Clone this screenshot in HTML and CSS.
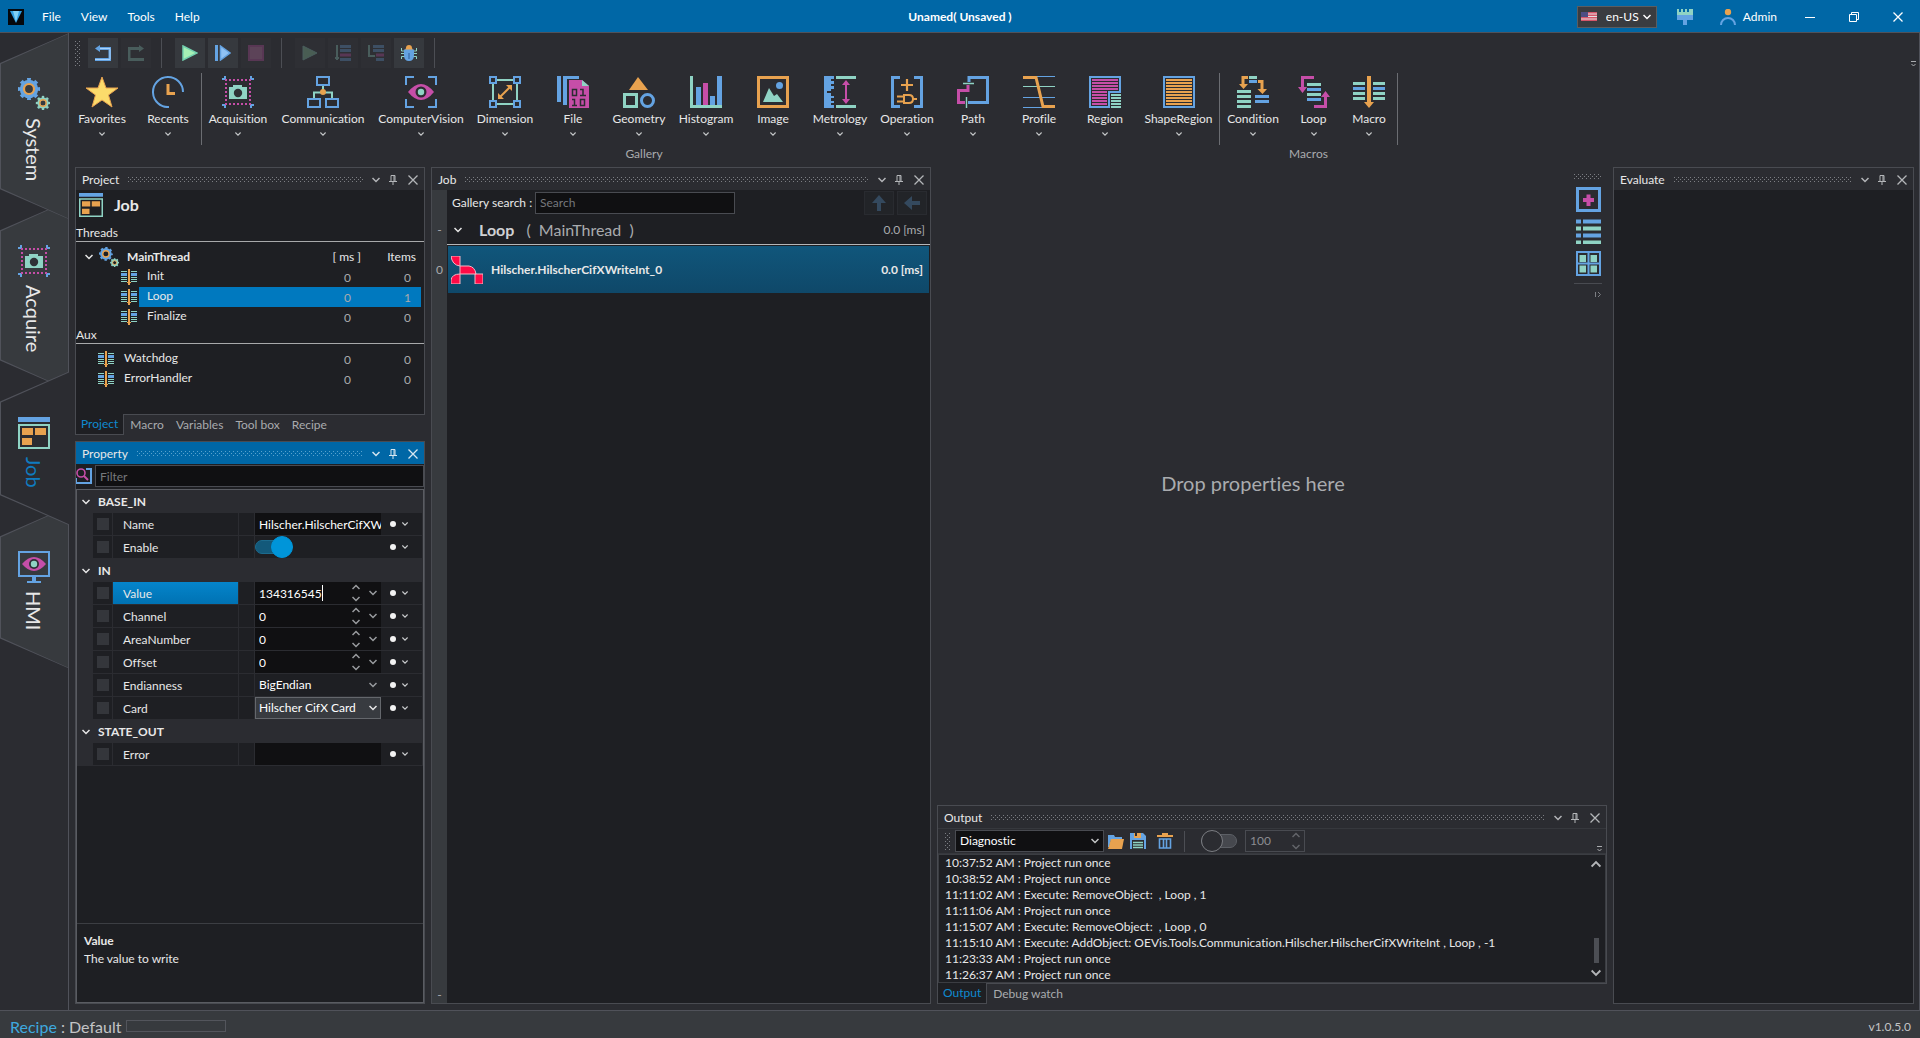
FILE: index.html
```html
<!DOCTYPE html>
<html lang="en">
<head>
<meta charset="utf-8">
<title>Unamed( Unsaved )</title>
<link rel="stylesheet" href="styles.css">
</head>
<body>
<svg class="sprite" aria-hidden="true">
  <symbol id="chev" viewBox="0 0 8 8"><path d="M0.5 2 L4 5.5 L7.5 2" fill="none" stroke="currentColor" stroke-width="1.5"/></symbol>
  <symbol id="chev-up" viewBox="0 0 8 8"><path d="M0.5 6 L4 2.5 L7.5 6" fill="none" stroke="currentColor" stroke-width="1.5"/></symbol>
  <symbol id="pin" viewBox="0 0 8 12"><path d="M2 7V1.5H6V7M0 7.5H8M4 8V11M5 2V7" fill="none" stroke="currentColor"/></symbol>
  <symbol id="close" viewBox="0 0 10 10"><path d="M0.5 0.5 L9.5 9.5 M9.5 0.5 L0.5 9.5" fill="none" stroke="currentColor" stroke-width="1.3"/></symbol>
  <symbol id="more" viewBox="0 0 8 8"><path d="M1 1.5H6M1.5 4 L3.5 6 L5.5 4" fill="none" stroke="currentColor"/></symbol>
  <symbol id="gears" viewBox="0 0 32 32">
    <circle cx="11" cy="11" r="7" fill="none" stroke="#64a3e2" stroke-width="4.5"/>
    <circle cx="11" cy="11" r="9.6" fill="none" stroke="#64a3e2" stroke-width="3" pathLength="16" stroke-dasharray="1" stroke-dashoffset="0.5"/>
    <circle cx="11" cy="11" r="5" fill="none" stroke="#e8a24f" stroke-width="2.2"/>
    <circle cx="25" cy="25" r="4.2" fill="none" stroke="#8fd3c4" stroke-width="3"/>
    <circle cx="25" cy="25" r="6" fill="none" stroke="#8fd3c4" stroke-width="2.4" pathLength="16" stroke-dasharray="1" stroke-dashoffset="0.5"/>
    <circle cx="25" cy="25" r="3.2" fill="none" stroke="#e8a24f" stroke-width="1.4"/>
  </symbol>
  <symbol id="camera" viewBox="0 0 32 32">
    <path d="M0 3H3V0M29 0V3H32M0 29H3V32M29 32V29H32" fill="none" stroke="#64a3e2" stroke-width="2"/>
    <path d="M4 4H28V28H4Z" fill="none" stroke="#c64ea8" stroke-width="2" stroke-dasharray="2 2" stroke-dashoffset="1"/>
    <path d="M7 11H11V9H20V11H25V23H7Z" fill="#8fd3c4"/>
    <circle cx="16" cy="17" r="4.2" fill="#2f3136"/>
  </symbol>
  <symbol id="job" viewBox="0 0 32 32">
    <path d="M0 0H32V5H0Z" fill="#64a3e2"/>
    <path d="M1 8H31V31H1Z" fill="none" stroke="#8fd3c4" stroke-width="2"/>
    <path d="M4 11H15V18H4ZM17 11H28V18H17ZM4 21H14V28H4Z" fill="#e8a24f"/>
  </symbol>
  <symbol id="hmi" viewBox="0 0 32 32">
    <path d="M1 1H31V25H1Z" fill="none" stroke="#64a3e2" stroke-width="2"/>
    <path d="M14 25H18V30H23V32H9V30H14Z" fill="#64a3e2"/>
    <path d="M4 13Q16 -1 28 13Q16 27 4 13Z" fill="#c64ea8"/>
    <circle cx="16" cy="13" r="5" fill="#2f3136"/><circle cx="16" cy="13" r="3.2" fill="#8fd3c4"/>
  </symbol>
  <symbol id="steps" viewBox="0 0 16 16">
    <path d="M0 2.500H6M10 2.500H16M0 8.500H6M10 8.500H16M0 10.500H6M10 10.500H16M0 12.500H6M10 12.500H16" stroke="#8fd3c4"/>
    <path d="M0 5.500H6M10 5.500H16" stroke="#64a3e2" stroke-width="3"/>
    <path d="M7 0H9V13H10V14H9V16H7V14H6V13H7Z" fill="#e8a24f"/>
  </symbol>
  <symbol id="search" viewBox="0 0 16 16">
    <path d="M0 10V15H15V1H10" fill="none" stroke="#64a3e2" stroke-width="2"/>
    <circle cx="5" cy="5" r="4" fill="#1e1f23" stroke="#c64ea8" stroke-width="1.6"/><path d="M8 8L12 12" stroke="#c64ea8" stroke-width="2"/>
  </symbol>
</svg>

<header class="titlebar">
  <svg class="logo" viewBox="0 0 16 16"><path d="M0 0H16V16H0Z" fill="#05080c"/><path d="M2 2H14L8 14Z" fill="#2f9de0"/><path d="M5 2H11L8 13Z" fill="#7fd0f5"/></svg>
  <nav class="menu"><button>File</button><button>View</button><button>Tools</button><button>Help</button></nav>
  <h1 class="doc-title">Unamed( Unsaved )</h1>
  <div class="session">
    <label class="lang">
      <svg width="16" height="9" viewBox="0 0 16 9"><path d="M0 0H16V9H0Z" fill="#e6dfe2"/><path d="M0 .75H16M0 3.25H16M0 5.75H16M0 8.25H16" stroke="#d5566a" stroke-width="1.4"/><path d="M0 0H7V5H0Z" fill="#4d4d83"/></svg>
      <select aria-label="Language"><option>en-US</option></select>
      <svg class="ic8"><use href="#chev"/></svg>
    </label>
    <button aria-label="Theme"><svg width="16" height="16" viewBox="0 0 16 16"><path d="M0 0H2V3H4V0H6V3H8V0H10V3H12V0H16V7H0Z" fill="#8fd3c4"/><path d="M0 6H16V11H10V16H6V11H0Z" fill="#64a3e2"/></svg></button>
    <button class="user"><svg width="16" height="16" viewBox="0 0 16 16"><circle cx="8" cy="3" r="3.2" fill="#e8a24f"/><path d="M1 16A7 7 0 0 1 15 16" fill="none" stroke="#64a3e2" stroke-width="2"/></svg>Admin</button>
  </div>
  <div class="window-buttons">
    <button aria-label="Minimize"><svg width="10" height="10"><path d="M0 5.5H10" stroke="#fff"/></svg></button>
    <button aria-label="Restore"><svg width="10" height="10"><path d="M.5 2.5H7.5V9.5H.5ZM2.5 2.5V.5H9.5V7.5H7.5" fill="none" stroke="#fff"/></svg></button>
    <button aria-label="Close"><svg width="10" height="10"><use href="#close"/></svg></button>
  </div>
</header>

<div class="body">
  <nav class="rail">
    <button class="rail-tab front"><svg class="ic32"><use href="#gears"/></svg><span>System</span></button>
    <button class="rail-tab"><svg class="ic32"><use href="#camera"/></svg><span>Acquire</span></button>
    <button class="rail-tab active"><svg class="ic32"><use href="#job"/></svg><span>Job</span></button>
    <button class="rail-tab"><svg class="ic32"><use href="#hmi"/></svg><span>HMI</span></button>
  </nav>

  <main class="workspace">
    <div class="toolbar">
      <i class="grip-v"></i>
      <div class="tool-group">
        <button class="tool" aria-label="Undo"><svg width="16" height="16" viewBox="0 0 16 16"><path d="M3 3.5H15V14.5H0" fill="none" stroke="#64a3e2" stroke-width="3"/><path d="M3 3.5H15V14.5H0" fill="none" stroke="#a9d2fa" stroke-width="1"/><path d="M0 3.5L5 0V7Z" fill="#64a3e2"/></svg></button>
        <button class="tool off" aria-label="Redo" disabled><svg width="16" height="16" viewBox="0 0 16 16"><path d="M13 3.5H1V14.5H16" fill="none" stroke="#8fd3c4" stroke-width="3"/><path d="M16 3.5L11 0V7Z" fill="#8fd3c4"/></svg></button>
      </div>
      <i class="tool-sep"></i>
      <div class="tool-group">
        <button class="tool" aria-label="Run"><svg width="16" height="16" viewBox="0 0 16 16"><path d="M1 1L15 8L1 15Z" fill="#a6f0b4" stroke="#72cfae" stroke-width="1.5"/></svg></button>
        <button class="tool" aria-label="Step"><svg width="16" height="16" viewBox="0 0 16 16"><path d="M1.5 0V16" stroke="#64a3e2" stroke-width="3"/><path d="M5.5 1L15 8L5.5 15Z" fill="#8fc2f5" stroke="#64a3e2" stroke-width="1.5"/></svg></button>
        <button class="tool off" aria-label="Stop" disabled><svg width="16" height="16" viewBox="0 0 16 16"><path d="M1 1H15V15H1Z" fill="#d478b4" stroke="#c64ea8" stroke-width="2"/></svg></button>
      </div>
      <i class="tool-sep"></i>
      <div class="tool-group">
        <button class="tool off" aria-label="Debug run" disabled><svg width="16" height="16" viewBox="0 0 16 16"><path d="M1 1L15 8L1 15Z" fill="#8fd3a4" stroke="#8fd3c4"/></svg></button>
        <button class="tool off" aria-label="Step over" disabled><svg width="16" height="16" viewBox="0 0 16 16"><path d="M2 0V15M0 13H4" stroke="#8fd3c4" stroke-width="2"/><path d="M5 1.5H16M5 5.5H16M5 14.5H16" stroke="#64a3e2" stroke-width="3"/><path d="M5 10H16" stroke="#c64ea8" stroke-width="3"/></svg></button>
        <button class="tool off" aria-label="Step into" disabled><svg width="16" height="16" viewBox="0 0 16 16"><path d="M1 0V11H7" fill="none" stroke="#8fd3c4" stroke-width="2"/><path d="M5 1.5H16M5 5.5H16M8 14.5H16" stroke="#64a3e2" stroke-width="3"/><path d="M8 10H16" stroke="#c64ea8" stroke-width="3"/></svg></button>
        <button class="tool" aria-label="Debug"><svg width="16" height="16" viewBox="0 0 16 16"><path d="M.5 3V6H15.5V3M0 8.5H16M.5 14V11.5H15.5V14" fill="none" stroke="#8fd3c4"/><path d="M5 3Q5 0 8 0Q11 0 11 3L12 5H4Z" fill="#e8a24f"/><path d="M3 4.5H13V10Q13 16 8 16Q3 16 3 10Z" fill="#64a3e2"/><path d="M8 8V14" stroke="#3f74b0" stroke-width="1.5"/></svg></button>
      </div>
      <i class="tool-sep"></i>
      <svg class="ic8 overflow"><use href="#more"/></svg>
    </div>

    <div class="ribbon">
      <section class="ribbon-group">
        <div class="ribbon-items">
          <button class="w66"><svg class="ic32" viewBox="0 0 32 32"><path d="M16 1L20 12H32L22.500 19L26 31L16 24L6 31L9.500 19L0 12H12Z" fill="#fbdb6b" stroke="#e8a24f"/></svg>Favorites<svg class="ic6"><use href="#chev"/></svg></button>
          <button class="w66"><svg class="ic32" viewBox="0 0 32 32"><path d="M17 31A15 15 0 1 1 31 16" fill="none" stroke="#64a3e2" stroke-width="2"/><path d="M16 8V17.500H23" fill="none" stroke="#e8a24f" stroke-width="3"/></svg>Recents<svg class="ic6"><use href="#chev"/></svg></button>
          <i class="ribbon-sep"></i>
          <button class="w72"><svg class="ic32"><use href="#camera"/></svg>Acquisition<svg class="ic6"><use href="#chev"/></svg></button>
          <button class="w98"><svg class="ic32" viewBox="0 0 32 32"><path d="M7 22V16.500H25V22M16 10V16" fill="none" stroke="#8fd3c4" stroke-width="2"/><path d="M10 1H22V9H10ZM1 23H13V31H1ZM19 23H31V31H19Z" fill="none" stroke="#64a3e2" stroke-width="2"/><circle cx="16" cy="16" r="3" fill="#e8a24f"/></svg>Communication<svg class="ic6"><use href="#chev"/></svg></button>
          <button class="w98"><svg class="ic32" viewBox="0 0 32 32"><path d="M1 9V1H9M23 1H31V9M31 23V31H23M9 31H1V23" fill="none" stroke="#64a3e2" stroke-width="2"/><path d="M3 16Q16 0 29 16Q16 32 3 16Z" fill="#c64ea8"/><circle cx="16" cy="16" r="5.500" fill="#2b2c31"/><circle cx="16" cy="16" r="3.200" fill="#8fd3c4"/></svg>ComputerVision<svg class="ic6"><use href="#chev"/></svg></button>
          <button class="w70"><svg class="ic32" viewBox="0 0 32 32"><path d="M4 4H28V28H4Z" fill="none" stroke="#8fd3c4" stroke-width="2"/><path d="M1 1H7V7H1ZM25 1H31V7H25ZM1 25H7V31H1ZM25 25H31V31H25Z" fill="#2b2c31" stroke="#64a3e2" stroke-width="2"/><path d="M11 21L21 11" stroke="#e8a24f" stroke-width="2"/><path d="M9 23V17L15 23ZM23 9V15L17 9Z" fill="#e8a24f"/></svg>Dimension<svg class="ic6"><use href="#chev"/></svg></button>
          <button class="w66"><svg class="ic32" viewBox="0 0 32 32"><path d="M2 0V26M8 29V1H22" fill="none" stroke="#64a3e2" stroke-width="4"/><path d="M12 4H25L32 10V32H12Z" fill="#c64ea8"/><path d="M25 4V10H32Z" fill="#8fd3c4"/><path d="M15.500 13.500H19.500V19.500H15.500ZM23 13.500H26V19.500M23 19.500H29M15 23.500H17.500V29.500M15 29.500H20M23.500 23.500H27.500V29.500H23.500Z" fill="none" stroke="#2b2c31" stroke-width="1.500"/></svg>File<svg class="ic6"><use href="#chev"/></svg></button>
          <button class="w66"><svg class="ic32" viewBox="0 0 32 32"><path d="M15 1L25 14H6Z" fill="#e8a24f"/><path d="M1.500 18.500H13.500V30.500H1.500Z" fill="none" stroke="#8fd3c4" stroke-width="3"/><circle cx="24.500" cy="24.500" r="6" fill="none" stroke="#64a3e2" stroke-width="3"/></svg>Geometry<svg class="ic6"><use href="#chev"/></svg></button>
          <button class="w68"><svg class="ic32" viewBox="0 0 32 32"><path d="M8.500 11V29M22.500 20V29M29.500 0V29" stroke="#64a3e2" stroke-width="5"/><path d="M15.500 7V29" stroke="#c64ea8" stroke-width="5"/><path d="M1.500 0V30.500H32" fill="none" stroke="#8fd3c4" stroke-width="3"/></svg>Histogram<svg class="ic6"><use href="#chev"/></svg></button>
          <button class="w66"><svg class="ic32" viewBox="0 0 32 32"><path d="M1.500 1.500H30.500V30.500H1.500Z" fill="none" stroke="#e8a24f" stroke-width="3"/><path d="M6 26L12 12L17 20L20 18L26 26Z" fill="#8fd3c4"/><circle cx="22.500" cy="9.500" r="3.500" fill="#64a3e2"/></svg>Image<svg class="ic6"><use href="#chev"/></svg></button>
          <button class="w68"><svg class="ic32" viewBox="0 0 32 32"><path d="M0 0H10V3H7V5H10V8H7V10H10V13H7V15H3V17H7V20H10V22H7V25H10V27H7V29H10V32H0Z" fill="#64a3e2"/><path d="M12 1.500H32M12 30.500H32" stroke="#8fd3c4" stroke-width="3"/><path d="M22 7V25" stroke="#c64ea8" stroke-width="2"/><path d="M22 4L26 9H18ZM22 28L26 23H18Z" fill="#c64ea8"/></svg>Metrology<svg class="ic6"><use href="#chev"/></svg></button>
          <button class="w66"><svg class="ic32" viewBox="0 0 32 32"><path d="M9 1.500H1.500V30.500H9M23 1.500H30.500V30.500H23" fill="none" stroke="#64a3e2" stroke-width="3"/><path d="M16 3V15M10 9H22" stroke="#e8a24f" stroke-width="2.200"/><path d="M6 20.500H13M6 25.500H13M22 23H26M13 19V27H18Q22 27 22 23Q22 19 18 19Z" fill="none" stroke="#e8a24f" stroke-width="2"/></svg>Operation<svg class="ic6"><use href="#chev"/></svg></button>
          <button class="w66"><svg class="ic32" viewBox="0 0 32 32"><path d="M12 6V1.500H30.500V26.500H11" fill="none" stroke="#64a3e2" stroke-width="3"/><path d="M11 9V14.500H1.500V26.500H8" fill="none" stroke="#c64ea8" stroke-width="3"/><path d="M6 7.500H17M9.500 21V32" stroke="#8fd3c4" stroke-width="1.400"/></svg>Path<svg class="ic6"><use href="#chev"/></svg></button>
          <button class="w66"><svg class="ic32" viewBox="0 0 32 32"><path d="M14 .5H32M0 21.500H32M0 31.500H22" stroke="#64a3e2"/><path d="M0 10.500H32" stroke="#8fd3c4"/><path d="M0 1.500H13L20 30.500H32" fill="none" stroke="#e8a24f" stroke-width="3"/></svg>Profile<svg class="ic6"><use href="#chev"/></svg></button>
          <button class="w66"><svg class="ic32" viewBox="0 0 32 32"><path d="M1 1H31V16H20V31H1Z" fill="none" stroke="#64a3e2" stroke-width="2"/><path d="M3 4H29M3 7H29M3 10H29M3 13H29M3 16H18M3 19H18M3 22H18M3 25H18M3 28H18" stroke="#c64ea8" stroke-width="2"/><path d="M22 19H32M22 22H32M22 25H32M22 28H32M22 31H32" stroke="#8fd3c4" stroke-width="2"/></svg>Region<svg class="ic6"><use href="#chev"/></svg></button>
          <button class="w81"><svg class="ic32" viewBox="0 0 32 32"><path d="M1 1H31V31H1Z" fill="none" stroke="#64a3e2" stroke-width="2"/><path d="M3 4H29M3 7H29M3 10H29M3 13H29M3 16H29M3 19H29M3 22H29M3 25H29M3 28H29" stroke="#e8a24f" stroke-width="2"/></svg>ShapeRegion<svg class="ic6"><use href="#chev"/></svg></button>
        </div>
        <h2>Gallery</h2>
      </section>
      <section class="ribbon-group">
        <div class="ribbon-items">
          <i class="ribbon-sep"></i>
          <button class="w66"><svg class="ic32" viewBox="0 0 32 32"><path d="M11 1.500H6V9M21 5.500H25V14" fill="none" stroke="#e8a24f" stroke-width="3"/><path d="M2 8H11L6.500 13ZM20.500 13H30L25.500 18Z" fill="#e8a24f"/><path d="M12 1.500H20M0 15.500H14M0 20.500H14M0 25.500H14M0 30.500H14" stroke="#8fd3c4" stroke-width="3"/><path d="M12 5.500H20M18 20.500H32M18 25.500H32" stroke="#64a3e2" stroke-width="3"/></svg>Condition<svg class="ic6"><use href="#chev"/></svg></button>
          <button class="w55"><svg class="ic32" viewBox="0 0 32 32"><path d="M16 1.500H4.500V12M16 30.500H27.500V20" fill="none" stroke="#c64ea8" stroke-width="3"/><path d="M0 11H9L4.500 17ZM23 21H32L27.500 15Z" fill="#c64ea8"/><path d="M9 8.500H23M9 18.500H23" stroke="#8fd3c4" stroke-width="3"/><path d="M9 13.500H23M9 23.500H23" stroke="#64a3e2" stroke-width="3"/></svg>Loop<svg class="ic6"><use href="#chev"/></svg></button>
          <button class="w56"><svg class="ic32" viewBox="0 0 32 32"><path d="M0 7.500H12M20 7.500H32M0 17.500H12M20 17.500H32M0 22.500H12M20 22.500H32" stroke="#8fd3c4" stroke-width="3"/><path d="M0 12.500H12M20 12.500H32" stroke="#64a3e2" stroke-width="3"/><path d="M14 0H18V26H21L16 32L11 26H14Z" fill="#e8a24f"/></svg>Macro<svg class="ic6"><use href="#chev"/></svg></button>
          <i class="ribbon-sep"></i>
        </div>
        <h2>Macros</h2>
      </section>
    </div>

    <div class="docks">
      <div class="dock-left">
        <section class="panel-tabs">
          <div class="panel project">
            <header class="panel-head"><h2>Project</h2><i class="dots"></i><svg class="ic8"><use href="#chev"/></svg><svg class="pin"><use href="#pin"/></svg><svg class="x"><use href="#close"/></svg></header>
            <div class="project-title"><svg width="24" height="24"><use href="#job"/></svg><h3>Job</h3></div>
            <h4 class="section">Threads</h4>
            <table class="tree">
              <thead><tr><th><div class="node root"><svg class="ic8"><use href="#chev"/></svg><svg width="20" height="20"><use href="#gears"/></svg><b>MainThread</b></div></th><th>[ ms ]</th><th>Items</th></tr></thead>
              <tbody>
                <tr><td><div class="node deep"><svg class="ic16"><use href="#steps"/></svg><span>Init</span></div></td><td>0</td><td>0</td></tr>
                <tr class="selected"><td><div class="node deep"><svg class="ic16"><use href="#steps"/></svg><span>Loop</span></div></td><td>0</td><td>1</td></tr>
                <tr><td><div class="node deep"><svg class="ic16"><use href="#steps"/></svg><span>Finalize</span></div></td><td>0</td><td>0</td></tr>
              </tbody>
            </table>
            <h4 class="section">Aux</h4>
            <table class="tree">
              <tbody>
                <tr><td><div class="node"><svg class="ic16"><use href="#steps"/></svg><span>Watchdog</span></div></td><td>0</td><td>0</td></tr>
                <tr><td><div class="node"><svg class="ic16"><use href="#steps"/></svg><span>ErrorHandler</span></div></td><td>0</td><td>0</td></tr>
              </tbody>
            </table>
          </div>
          <div class="tabs"><button class="on">Project</button><button>Macro</button><button>Variables</button><button>Tool box</button><button>Recipe</button></div>
        </section>

        <section class="panel property">
          <header class="panel-head focus"><h2>Property</h2><i class="dots"></i><svg class="ic8"><use href="#chev"/></svg><svg class="pin"><use href="#pin"/></svg><svg class="x"><use href="#close"/></svg></header>
          <div class="filter"><svg class="ic16"><use href="#search"/></svg><input type="text" placeholder="Filter" aria-label="Filter"></div>
          <div class="grid-box">
            <div class="group">
              <h3><svg class="ic8"><use href="#chev"/></svg>BASE_IN</h3>
              <div class="prop"><span class="tick"><input type="checkbox" aria-label="Link Name"></span><label for="p-name">Name</label><i></i><div class="val"><div class="field long"><input id="p-name" type="text" value="Hilscher.HilscherCifXWriteInt_0"></div><button class="opt" aria-label="Options"><svg class="ic6"><use href="#chev"/></svg></button></div></div>
              <div class="prop"><span class="tick"><input type="checkbox" aria-label="Link Enable"></span><label for="p-enable">Enable</label><i></i><div class="val"><div class="field plain"><input id="p-enable" class="switch" type="checkbox" checked></div><button class="opt" aria-label="Options"><svg class="ic6"><use href="#chev"/></svg></button></div></div>
            </div>
            <div class="group">
              <h3><svg class="ic8"><use href="#chev"/></svg>IN</h3>
              <div class="prop current"><span class="tick"><input type="checkbox" aria-label="Link Value"></span><label for="p-value">Value</label><i></i><div class="val"><div class="field"><input id="p-value" class="editing" type="text" value="134316545"><i class="caret"></i><span class="spin"><svg class="ic8"><use href="#chev-up"/></svg><svg class="ic8"><use href="#chev"/></svg></span><svg class="ic8"><use href="#chev"/></svg></div><button class="opt" aria-label="Options"><svg class="ic6"><use href="#chev"/></svg></button></div></div>
              <div class="prop"><span class="tick"><input type="checkbox" aria-label="Link Channel"></span><label for="p-channel">Channel</label><i></i><div class="val"><div class="field"><input id="p-channel" type="text" value="0"><span class="spin"><svg class="ic8"><use href="#chev-up"/></svg><svg class="ic8"><use href="#chev"/></svg></span><svg class="ic8"><use href="#chev"/></svg></div><button class="opt" aria-label="Options"><svg class="ic6"><use href="#chev"/></svg></button></div></div>
              <div class="prop"><span class="tick"><input type="checkbox" aria-label="Link AreaNumber"></span><label for="p-area">AreaNumber</label><i></i><div class="val"><div class="field"><input id="p-area" type="text" value="0"><span class="spin"><svg class="ic8"><use href="#chev-up"/></svg><svg class="ic8"><use href="#chev"/></svg></span><svg class="ic8"><use href="#chev"/></svg></div><button class="opt" aria-label="Options"><svg class="ic6"><use href="#chev"/></svg></button></div></div>
              <div class="prop"><span class="tick"><input type="checkbox" aria-label="Link Offset"></span><label for="p-offset">Offset</label><i></i><div class="val"><div class="field"><input id="p-offset" type="text" value="0"><span class="spin"><svg class="ic8"><use href="#chev-up"/></svg><svg class="ic8"><use href="#chev"/></svg></span><svg class="ic8"><use href="#chev"/></svg></div><button class="opt" aria-label="Options"><svg class="ic6"><use href="#chev"/></svg></button></div></div>
              <div class="prop"><span class="tick"><input type="checkbox" aria-label="Link Endianness"></span><label for="p-endian">Endianness</label><i></i><div class="val"><div class="field plain"><select id="p-endian"><option>BigEndian</option></select><svg class="ic8"><use href="#chev"/></svg></div><button class="opt" aria-label="Options"><svg class="ic6"><use href="#chev"/></svg></button></div></div>
              <div class="prop"><span class="tick"><input type="checkbox" aria-label="Link Card"></span><label for="p-card">Card</label><i></i><div class="val"><div class="field raised"><select id="p-card"><option>Hilscher CifX Card</option></select><svg class="ic8"><use href="#chev"/></svg></div><button class="opt" aria-label="Options"><svg class="ic6"><use href="#chev"/></svg></button></div></div>
            </div>
            <div class="group">
              <h3><svg class="ic8"><use href="#chev"/></svg>STATE_OUT</h3>
              <div class="prop"><span class="tick"><input type="checkbox" aria-label="Link Error"></span><label for="p-error">Error</label><i></i><div class="val"><div class="field"><input id="p-error" type="text" value=""></div><button class="opt" aria-label="Options"><svg class="ic6"><use href="#chev"/></svg></button></div></div>
            </div>
            <div class="help"><b>Value</b><p>The value to write</p></div>
          </div>
        </section>
      </div>

      <section class="panel jobs">
        <header class="panel-head"><h2>Job</h2><i class="dots"></i><svg class="ic8"><use href="#chev"/></svg><svg class="pin"><use href="#pin"/></svg><svg class="x"><use href="#close"/></svg></header>
        <div class="job-body">
          <div class="gutter"><span class="g-loop">-</span><span class="g-item">0</span><span class="g-end">-</span></div>
          <div class="job-list">
            <div class="job-search">
              <label for="gallery">Gallery search :</label><input id="gallery" type="text" placeholder="Search">
              <button class="nav-btn" aria-label="Up" disabled><svg width="16" height="16" viewBox="0 0 16 16"><path d="M8 0L15 8H10V16H6V8H1Z" fill="#34495e"/></svg></button>
              <button class="nav-btn" aria-label="Back" disabled><svg width="16" height="16" viewBox="0 0 16 16"><path d="M0 8L8 1V6H16V10H8V15Z" fill="#34495e"/></svg></button>
            </div>
            <div class="loop-row"><svg class="ic8"><use href="#chev"/></svg><h3>Loop</h3><span class="thread">(&nbsp; MainThread &nbsp;)</span><span class="time">0.0 [ms]</span></div>
            <div class="job-item">
              <svg width="32" height="28" viewBox="0 0 32 28"><path d="M0 0H9V10Q1 9 0 0ZM0 28V24Q1 18 9 18V28ZM9 10H18Q24 11 25 18H9ZM25 18H32V28H24V18Z" fill="#ff0a46" stroke="#f4b6c4" stroke-width="1"/></svg>
              <b>Hilscher.HilscherCifXWriteInt_0</b><b class="time">0.0 [ms]</b>
            </div>
          </div>
        </div>
      </section>

      <div class="dock-center">
        <div class="canvas">
          <p>Drop properties here</p>
          <div class="side-tools">
            <i class="dots"></i>
            <button aria-label="Add"><svg width="25" height="25" viewBox="0 0 25 25"><path d="M1.500 1.500H23.500V23.500H1.500Z" fill="none" stroke="#64a3e2" stroke-width="3"/><path d="M10.500 7.500H14.500V11H18V15H14.500V19H10.500V15H7V11H10.500Z" fill="#c64ea8"/></svg></button>
            <button aria-label="List view"><svg width="25" height="25" viewBox="0 0 25 25"><path d="M0 2.500H5M7 2.500H25M0 16.500H5M7 16.500H25" stroke="#64a3e2" stroke-width="4"/><path d="M0 9.500H5M7 9.500H25M0 23.500H5M7 23.500H25" stroke="#8fd3c4" stroke-width="4"/></svg></button>
            <button aria-label="Grid view"><svg width="25" height="25" viewBox="0 0 25 25"><path d="M1 1H24V24H1ZM12.500 1V24M1 12.500H24" fill="none" stroke="#64a3e2" stroke-width="2"/><path d="M3.500 4H10V11H3.500ZM14.500 4H21V11H14.500ZM3.500 14.500H10V21.500H3.500ZM14.500 14.500H21V21.500H14.500Z" fill="#8fd3c4"/></svg></button>
            <hr>
            <svg class="ic8 more"><path d="M1.500 1V6M4 1L6.500 3.500L4 6" fill="none" stroke="currentColor"/></svg>
          </div>
        </div>
        <section class="panel-tabs">
          <div class="panel output">
            <header class="panel-head"><h2>Output</h2><i class="dots"></i><svg class="ic8"><use href="#chev"/></svg><svg class="pin"><use href="#pin"/></svg><svg class="x"><use href="#close"/></svg></header>
            <div class="out-bar">
              <i class="grip-v"></i>
              <div class="combo"><select aria-label="Channel"><option>Diagnostic</option></select><svg class="ic8"><use href="#chev"/></svg></div>
              <button aria-label="Open"><svg width="16" height="16" viewBox="0 0 16 16"><path d="M0 2H6L7 4H14V7H3L1 14H0Z" fill="#64a3e2"/><path d="M3 6H16L14 16H0Z" fill="#e8a24f"/></svg></button>
              <button aria-label="Save"><svg width="16" height="16" viewBox="0 0 16 16"><path d="M0 0H13L16 3V16H0Z" fill="#64a3e2"/><path d="M4 0H11V5H4Z" fill="#e8a24f"/><path d="M5 0H7V3H5Z" fill="#2b2c31"/><path d="M2 7H14V16H2Z" fill="#2b2c31"/><path d="M3 9.500H13M3 12H13M3 14.500H13" stroke="#8fd3c4" stroke-width="1.500"/></svg></button>
              <button class="clear" aria-label="Clear"><svg width="16" height="16" viewBox="0 0 16 16"><path d="M5 0H11V2H16V4H0V2H5Z" fill="#e8a24f"/><path d="M2.500 6H13.500V15H2.500ZM6.500 6V15M9.500 6V15" fill="none" stroke="#64a3e2" stroke-width="1.600"/></svg></button>
              <i class="tool-sep"></i>
              <input type="checkbox" class="switch" aria-label="Limit">
              <div class="count"><input type="text" value="100" aria-label="Line count"><span class="spin"><svg class="ic8"><use href="#chev-up"/></svg><svg class="ic8"><use href="#chev"/></svg></span></div>
              <svg class="ic8 overflow"><use href="#more"/></svg>
            </div>
            <div class="log">
              <ol>
                <li>10:37:52 AM : Project run once</li>
                <li>10:38:52 AM : Project run once</li>
                <li>11:11:02 AM : Execute: RemoveObject: &nbsp;, Loop , 1</li>
                <li>11:11:06 AM : Project run once</li>
                <li>11:15:07 AM : Execute: RemoveObject: &nbsp;, Loop , 0</li>
                <li>11:15:10 AM : Execute: AddObject: OEVis.Tools.Communication.Hilscher.HilscherCifXWriteInt , Loop , -1</li>
                <li>11:23:33 AM : Project run once</li>
                <li>11:26:37 AM : Project run once</li>
              </ol>
              <div class="scroll"><svg class="ic10"><use href="#chev-up"/></svg><i></i><svg class="ic10"><use href="#chev"/></svg></div>
            </div>
          </div>
          <div class="tabs"><button class="on">Output</button><button>Debug watch</button></div>
        </section>
      </div>

      <section class="panel evaluate">
        <header class="panel-head"><h2>Evaluate</h2><i class="dots"></i><svg class="ic8"><use href="#chev"/></svg><svg class="pin"><use href="#pin"/></svg><svg class="x"><use href="#close"/></svg></header>
      </section>
    </div>
  </main>
</div>

<footer class="status"><p><a href="#recipe">Recipe</a> : Default</p><i class="bar"></i><span>v1.0.5.0</span></footer>
</body>
</html>
```
FILE: styles.css
```css
:root {
  --bg: #2b2c31;
  --panel: #1e1f23;
  --raised: #373a3e;
  --well: #101012;
  --line: #494b51;
  --text: #e8e8e8;
  --dim: #a9abae;
  --accent: #0067a6;
  --select: #0079bf;
}

* { box-sizing: border-box; margin: 0; padding: 0; }

body {
  display: flex;
  flex-direction: column;
  min-height: 100vh;
  background: var(--bg);
  color: var(--text);
  font: 12px/16px Lato, "Open Sans", sans-serif;
  font-variant-ligatures: none;
}

button, input, select {
  border: 0;
  border-radius: 0;
  outline: 0;
  background: none;
  color: inherit;
  font: inherit;
  font-variant-ligatures: none;
  appearance: none;
}

h1, h2, h3, h4 { font: inherit; font-variant-ligatures: none; }
ol { list-style: none; }
a { color: #3ea9df; text-decoration: none; }
svg { display: block; flex: none; }

.sprite { position: absolute; width: 0; height: 0; }
.ic6 { width: 6px; height: 6px; }
.ic8 { width: 8px; height: 8px; }
.ic10 { width: 10px; height: 10px; }
.ic16 { width: 16px; height: 16px; }
.ic32 { width: 32px; height: 32px; }
.pin { width: 8px; height: 12px; }
.x { width: 10px; height: 10px; }

.dots, .grip-v {
  --dot: conic-gradient(from 270deg at 1px 1px, #7c7e83 90deg, transparent 0);
  background-image: var(--dot), var(--dot);
  background-size: 4px 4px;
  background-position: 0 0, 2px 2px;
}
.dots { flex: 1; height: 5px; }
.grip-v { width: 5px; height: 25px; }

/* title bar */
.titlebar {
  display: grid;
  grid-template-columns: minmax(0, 1fr) auto minmax(0, 1fr);
  align-items: center;
  height: 32px;
  padding-top: 1px;
  background: var(--accent);
  color: #fff;
}
.logo { width: 16px; height: 16px; margin-left: 8px; grid-area: 1 / 1; }
.menu { grid-area: 1 / 1; display: flex; gap: 20px; padding-left: 42px; }
.doc-title { grid-area: 1 / 2; font-weight: 700; }
.session { grid-area: 1 / 3; justify-self: end; display: flex; align-items: center; gap: 20px; padding-right: 143px; }
.lang {
  display: flex;
  align-items: center;
  gap: 4px;
  width: 80px;
  height: 22px;
  padding: 0 5px 0 3px;
  border: 1px solid #5a5d61;
  background: #3a3c40;
}
.lang select { flex: 1; min-width: 0; padding-left: 5px; }
.user { display: flex; align-items: center; gap: 7px; margin-left: 7px; }
.window-buttons { grid-area: 1 / 3; justify-self: end; display: flex; gap: 34px; padding-right: 17px; }

/* shell */
.body { flex: 1; display: flex; border-block: 1px solid #50525a; }
.rail {
  display: flex;
  flex-direction: column;
  width: 69px;
  background: linear-gradient(#50525a, #50525a) right / 1px 100% no-repeat;
}
.rail-tab {
  position: relative;
  z-index: 0;
  display: flex;
  flex-direction: column;
  align-items: center;
  gap: 8px;
  width: 69px;
  margin-bottom: -19px;
  padding: 45px 1px 38px 0;
  background: #50525a;
  clip-path: polygon(0 30px, 100% 0, 100% 100%, 0 calc(100% - 30px));
}
.rail-tab::before {
  content: "";
  position: absolute;
  z-index: -1;
  inset: 0;
  background: var(--raised);
  clip-path: polygon(1px 31px, calc(100% - 1px) 1px, calc(100% - 1px) calc(100% - 1px), 1px calc(100% - 31px));
}
.rail-tab span { writing-mode: vertical-rl; font-size: 20px; line-height: 24px; }
.rail-tab.front { z-index: 2; }
.rail-tab.active { z-index: 2; color: #0f7cc0; }
.rail-tab.active::before { background: var(--bg); clip-path: polygon(1px 31px, 100% 1px, 100% calc(100% - 1px), 1px calc(100% - 31px)); }

.workspace { flex: 1; min-width: 0; display: flex; flex-direction: column; border-right: 1px solid #50525a; padding: 5px 5px 6px 6px; }

/* toolbar */
.toolbar { display: flex; align-items: center; height: 30px; }
.tool-group { display: flex; gap: 3px; }
.toolbar .grip-v { margin-right: 8px; }
.tool { display: grid; place-items: center; width: 30px; height: 30px; background: #36393e; }
.tool.off { background: #2e2f34; }
.tool.off svg { opacity: .28; }
.tool-sep { width: 1px; height: 30px; margin: 0 13px 0 10px; background: #4c4e54; }
.overflow { margin: 0 -4px 0 auto; align-self: flex-end; color: var(--dim); }

/* ribbon */
.ribbon { display: flex; height: 99px; padding-top: 5px; margin-left: -6px; }
.ribbon-items { display: flex; height: 72px; }
.ribbon-items button { display: flex; flex-direction: column; align-items: center; padding-top: 3px; white-space: nowrap; }
.ribbon-items button .ic32 { margin-bottom: 3px; }
.ribbon-items button .ic6 { margin-top: 4px; color: #c4c6c8; }
.ribbon-group h2 { margin-top: 1px; text-align: center; color: var(--dim); }
.ribbon-sep { width: 1px; background: #6b6d72; }
.w55 { width: 55px; } .w56 { width: 56px; } .w66 { width: 66px; } .w68 { width: 68px; }
.w70 { width: 70px; } .w72 { width: 72px; } .w81 { width: 81px; } .w98 { width: 98px; }

/* docking */
.docks { flex: 1; display: grid; grid-template-columns: 350px 500px minmax(0, 1fr) 301px; gap: 6px; }
.dock-left, .dock-center { display: flex; flex-direction: column; gap: 6px; min-width: 0; }
.panel { display: flex; flex-direction: column; border: 1px solid var(--line); background: var(--panel); min-width: 0; }
.panel-head { display: flex; align-items: center; height: 22px; padding: 1px 6px 0 6px; background: var(--bg); }
.panel-head .dots { margin: 0 9px; }
.panel-head svg { color: #b4b6b9; }
.panel-head .pin { margin: 0 11px 0 9px; }
.panel-head.focus { background: var(--accent); }
.panel-head.focus .dots { --dot: conic-gradient(from 270deg at 1px 1px, #58a2cd 90deg, transparent 0); }
.panel-head.focus svg { color: #d7e6f0; }

.tabs { display: flex; }
.tabs button { height: 20px; padding: 0 6px; color: var(--dim); }
.tabs .on { margin-top: -1px; height: 21px; padding: 0 5px; border: 1px solid var(--line); border-top: 0; background: var(--panel); color: #0f8ad0; position: relative; }

/* project */
.project { height: 248px; }
.project-title { display: flex; align-items: center; gap: 11px; padding: 3px 3px 8px; }
.project-title h3 { font-size: 16px; line-height: 24px; font-weight: 700; }
.section { border-bottom: 1px solid #a8a9ab; line-height: 16px; }
.tree { width: 345px; margin-top: 5px; border-collapse: collapse; table-layout: fixed; }
.tree th, .tree td { height: 20px; text-align: right; }
.tree tr > :nth-child(n+2) { width: 60px; }
.tree td:nth-child(n+2) { padding: 2px 10px 0 0; color: var(--dim); }
.tree th { font-weight: 400; }
.tree th:last-child { padding-right: 5px; }
.node { display: flex; align-items: center; height: 20px; padding-left: 22px; text-align: left; }
.node.deep { padding-left: 45px; }
.node.root { padding-left: 9px; }
.node.root svg + svg { margin: 0 8px 0 6px; }
.node span { flex: 1; margin-left: 2px; padding: 0 0 2px 8px; line-height: 18px; }
.selected .node span, .selected td:nth-child(n+2) { background: var(--select); }

/* property grid */
.property { flex: 1; }
.filter { display: flex; align-items: center; gap: 3px; height: 24px; }
.filter input { flex: 1; height: 22px; padding-left: 4px; border: 1px solid var(--line); background: var(--well); }
::placeholder { color: #76787c; opacity: 1; }
.grid-box { flex: 1; display: flex; flex-direction: column; border: 1px solid #5a5c62; margin-top: 1px; }
.group { background: var(--bg); }
.group h3 { display: flex; align-items: center; gap: 8px; height: 23px; padding-left: 5px; font-weight: 700; }
.prop { display: grid; grid-template-columns: 19px 125px 15px minmax(0, 1fr); gap: 1px; height: 22px; margin: 0 1px 1px 16px; }
.prop > * { background: var(--panel); }
.group:last-of-type .prop:last-child { margin-bottom: 0; }
.tick { display: grid; place-items: center; }
.tick input { width: 12px; height: 12px; background: #34363b; }
.prop label { padding: 1px 0 0 10px; line-height: 21px; }
.current label { background: linear-gradient(#0585cb, #0072b3); }
.val { display: flex; min-width: 0; }
.field { display: flex; align-items: center; flex: 1; min-width: 0; padding: 0 4px; background: var(--well); color: #fff; }
.field.long { padding-right: 0; }
.field input[type=text], .field select { flex: 1; min-width: 0; height: 20px; }
.field .editing[type=text] { flex: none; width: 63px; }
.field > svg, .spin { color: #9a9ca0; }
.field .spin { margin-left: auto; }
.field .spin + svg { margin-left: 9px; }
.caret { width: 1px; height: 16px; background: #fff; }
.spin { display: flex; flex-direction: column; gap: 4px; }
.field.plain { background: none; }
.field.raised { padding: 0 3px; border: 1px solid #64676c; background: #383b40; }
.field.raised svg { color: var(--text); }
.field.plain .switch { margin-left: -4px; }
.opt { display: flex; align-items: center; gap: 6px; width: 41px; padding-left: 9px; color: #c9cbcd; }
.opt::before { content: ""; width: 6px; height: 6px; border-radius: 50%; background: #f2f2f2; }
.switch {
  display: flex;
  align-items: center;
  width: 36px;
  height: 14px;
  border: 1px solid #5c5f65;
  border-radius: 7px;
  background: #46484e;
}
.switch::before { content: ""; width: 20px; height: 20px; flex: none; border: 1px solid #7b7d82; border-radius: 50%; background: var(--bg); margin-left: -1px; }
.switch:checked { border-color: #1c6b8e; background: #13597a; }
.switch:checked::before { margin-left: 15px; border-color: #0095d9; background: #0095d9; }
.help { margin-top: auto; height: 79px; padding: 9px 7px; border-top: 1px solid #3c3e43; }
.help p { margin-top: 2px; }

/* job list */
.job-body { flex: 1; display: flex; }
.gutter { display: flex; flex-direction: column; align-items: center; width: 15px; padding: 32px 0 0; background: var(--raised); color: var(--dim); }
.g-item { margin-top: 24px; }
.g-end { margin-top: auto; }
.job-list { flex: 1; min-width: 0; }
.job-search { display: flex; align-items: center; height: 25px; padding: 0 3px 0 5px; }
.job-search label { width: 83px; white-space: nowrap; }
.job-search input { width: 200px; height: 22px; margin-right: auto; padding-left: 4px; border: 1px solid var(--line); background: var(--well); }
.nav-btn { display: grid; place-items: center; width: 30px; height: 24px; margin-left: 3px; border: 1px solid #292b30; background: #222428; }
.loop-row { display: flex; align-items: center; height: 30px; padding: 1px 5px 0 7px; border-bottom: 1px solid #b5b6b8; color: var(--dim); font-size: 16px; }
.loop-row .ic8 { color: var(--text); }
.loop-row h3 { margin: 0 12px 0 17px; font-weight: 700; color: #d0d1d3; }
.time { margin-left: auto; font-size: 12px; }
.job-item { display: flex; align-items: center; gap: 8px; height: 47px; margin: 1px; padding: 0 6px 0 3px; background: linear-gradient(#10567b, #0f4869); }

/* centre */
.canvas { flex: 1; display: flex; align-items: stretch; }
.canvas p { flex: 1; align-self: center; text-align: center; color: var(--dim); font-size: 20px; line-height: 24px; }
.side-tools { display: flex; flex-direction: column; align-items: center; gap: 7px; width: 28px; margin: 0 5px; padding-top: 7px; }
.side-tools .dots { flex: none; align-self: stretch; margin-bottom: 1px; }
.side-tools hr { align-self: stretch; height: 1px; border: 0; background: var(--line); }
.side-tools .more { align-self: flex-end; color: #7c7e83; }

.out-bar { display: flex; align-items: center; height: 26px; padding: 0 6px 0 7px; border-block: 1px solid #36383d; background: var(--bg); }
.out-bar .grip-v { height: 17px; margin-right: 5px; }
.combo { display: flex; align-items: center; width: 149px; height: 22px; padding: 0 4px; margin-right: 4px; border: 1px solid var(--line); background: var(--well); color: #fff; }
.combo select { flex: 1; }
.combo svg { color: #c4c6c8; }
.out-bar button { margin-right: 6px; }
.out-bar .clear { margin: 0 0 0 5px; }
.out-bar .tool-sep { height: 21px; margin: 0 16px 0 11px; }
.count { display: flex; align-items: center; width: 60px; height: 22px; margin-left: 8px; padding: 0 4px; border: 1px solid var(--line); color: #8b8d91; }
.count input { flex: 1; min-width: 0; }
.count .spin { color: #63656a; }
.log { display: flex; justify-content: space-between; height: 129px; padding-left: 6px; border: 1px solid #3b3d42; }
.scroll { display: flex; flex-direction: column; align-items: center; justify-content: space-between; width: 18px; padding: 4px 0; color: #b4b6b9; }
.scroll i { width: 5px; height: 25px; margin: 64px 0 0; background: #4c4e54; }

/* status bar */
.status { display: flex; align-items: center; height: 27px; padding: 5px 9px 0 10px; background: var(--raised); color: #c3c4c6; }
.status p { font-size: 16px; line-height: 20px; }
.status .bar { width: 100px; height: 12px; margin: 0 auto 2px 5px; border: 1px solid #53555c; }
```
